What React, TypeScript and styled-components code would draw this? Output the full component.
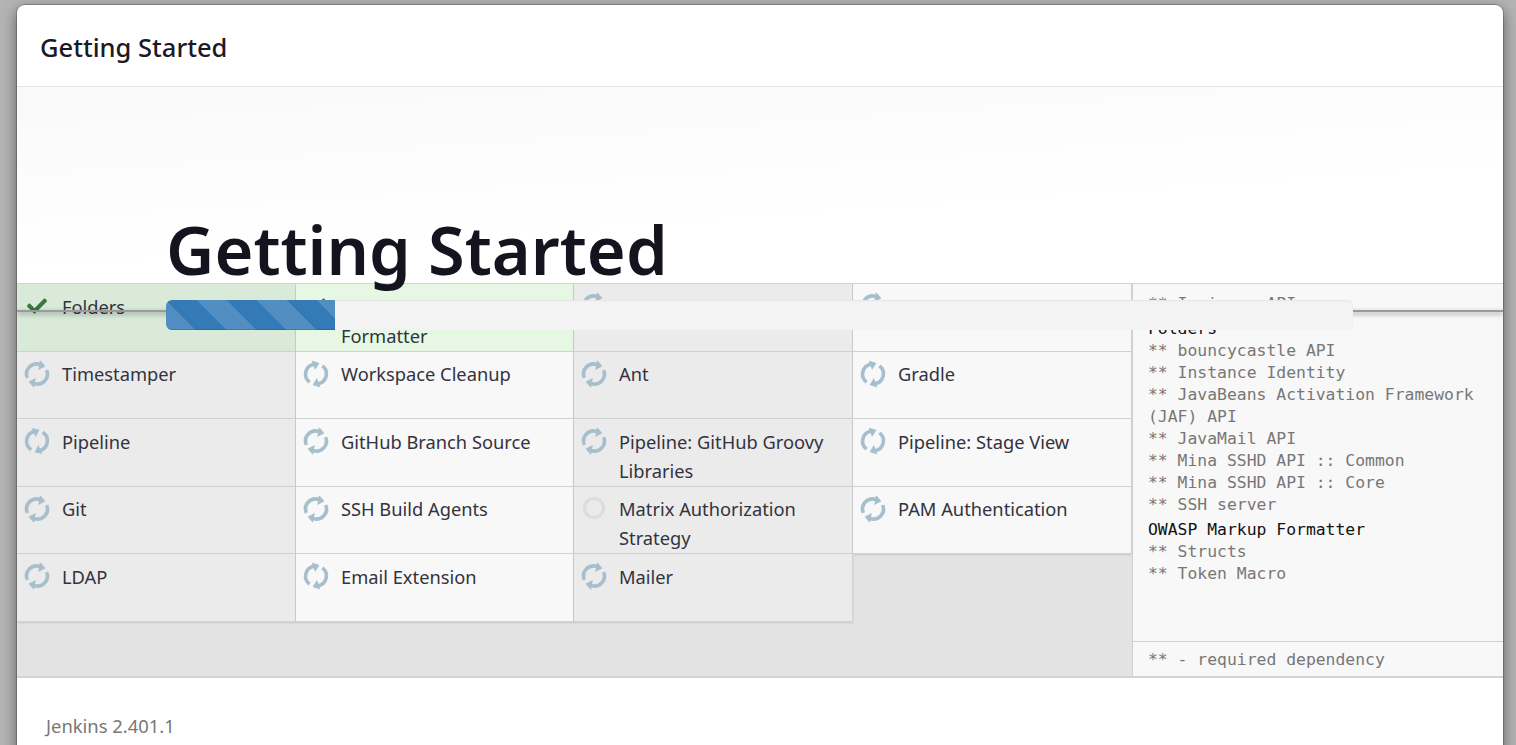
import React from "react";
import styled, { createGlobalStyle } from "styled-components";
import { FaCheck } from "react-icons/fa";

const Global = createGlobalStyle`
  html, body { margin: 0; height: 100%; overflow: hidden; background: #b4b4b4; }
  * { box-sizing: border-box; }
`;

const Backdrop = styled.div`
  height: 745px;
  padding: 5px 13px 0 17px;
  overflow: hidden;
  font-family: "Noto Sans", "Open Sans", sans-serif;
`;
const Dialog = styled.div`
  position: relative;
  background: #fff;
  border-radius: 8px 8px 0 0;
  box-shadow: 0 0 0 1px rgba(0, 0, 0, 0.2), 0 5px 15px rgba(0, 0, 0, 0.5);
  height: 800px;
  overflow: hidden;
`;
const Header = styled.header`
  height: 82px;
  padding: 2px 23px 0;
  display: flex;
  align-items: center;
  border-bottom: 1px solid #e5e5e5;
  font-size: 25.5px;
  font-weight: 500;
  color: #1a1a26;
`;
const Hero = styled.div`
  height: 196px;
  padding: 0 0 0 149px;
  display: flex;
  align-items: flex-end;
  background: linear-gradient(176deg, #f9f9f9 0%, #fff 62%);
`;
const Heading = styled.h1`
  position: relative;
  z-index: 2;
  margin: 0 0 -9px;
  font-size: 66.7px;
  line-height: 84px;
  font-weight: 600;
  color: #14141f;
`;
const Install = styled.div`
  display: grid;
  grid-template-columns: 1115px 371px;
  height: 395px;
  border-top: 1px solid #d4d4d4;
  border-bottom: 2px solid #d2d2d2;
  background: #e3e3e3;
`;
const Grid = styled.div`
  display: grid;
  grid-template-columns: 279px 278px 279px 279px;
  grid-auto-rows: 67.5px;
  align-content: start;
`;
const Cell = styled.div<{ $tone: "dark" | "light" | "okDark" | "okLight" }>`
  display: flex;
  align-items: flex-start;
  gap: 13px;
  padding: 7.5px 8px 0 8px;
  overflow: hidden;
  border-right: 1px solid #d2d2d2;
  border-bottom: 1px solid #d2d2d2;
  box-shadow: 0 1px 2px rgba(0, 0, 0, 0.12);
  background: ${(p) =>
    ({ dark: "#ebebeb", light: "#f8f8f8", okDark: "#d9ead9", okLight: "#e6f8e3" })[p.$tone]};
`;
const IconSlot = styled.span`
  flex: 0 0 24px;
  width: 24px;
  min-width: 0;
  height: 30px;
  display: flex;
  align-items: center;
  justify-content: center;
`;
const Spinner = styled.svg<{ $angle: number }>`
  width: 28px;
  height: 28px;
  margin: -1px -2px 0 -2px;
  flex: none;
  transform: rotate(${(p) => p.$angle}deg);
`;
const Check = styled(FaCheck)`
  width: 24px;
  height: 20px;
  margin-top: -1px;
  flex: none;
  color: #3c763d;
`;
const Pending = styled.span`
  width: 22px;
  height: 22px;
  margin-top: -3px;
  flex: none;
  border-radius: 50%;
  border: 3px solid #dcdcdc;
`;
const Name = styled.span`
  max-width: 212px;
  font-size: 18.3px;
  line-height: 29px;
  color: #333340;
`;
const Log = styled.aside`
  display: flex;
  flex-direction: column;
  border-left: 1px solid #cfcfcf;
  background: #f8f8f8;
  font-family: "DejaVu Sans Mono", monospace;
  font-size: 16.4px;
  line-height: 22px;
  color: #777;
`;
const LogBody = styled.div`
  flex: 1;
  padding: 9px 15px 0;
`;
const Plugin = styled.div`
  margin-top: 3px;
  color: #111;
`;
const Dep = styled.div`
  color: #777;
`;
const LogFooter = styled.div`
  height: 35px;
  padding: 7px 15px 0;
  border-top: 1px solid #d0d0d0;
`;
const Footer = styled.footer`
  padding: 34px 29px 0;
  font-size: 18.4px;
  line-height: 28px;
  color: #777;
`;
const Rule = styled.div`
  position: absolute;
  left: 0;
  right: 0;
  top: 305px;
  height: 2px;
  background: #9a9a9a;
  box-shadow: 0 2px 5px rgba(0, 0, 0, 0.45);
  z-index: 3;
`;
const Track = styled.div`
  position: absolute;
  left: 149px;
  top: 295px;
  width: 1187px;
  height: 30px;
  border-radius: 6px;
  background: #f3f3f3;
  overflow: hidden;
  box-shadow: inset 0 1px 2px rgba(0, 0, 0, 0.06);
  z-index: 4;
`;
const Fill = styled.div`
  height: 100%;
  background-color: #337ab7;
  background-image: repeating-linear-gradient(
    45deg,
    rgba(255, 255, 255, 0.15) 0,
    rgba(255, 255, 255, 0.15) 21.21px,
    transparent 21.21px,
    transparent 42.43px
  );
  box-shadow: inset 0 -1px 0 rgba(0, 0, 0, 0.15);
`;

function SyncIcon({ angle }: { angle: number }) {
  return (
    <Spinner $angle={angle} viewBox="0 0 28 28" fill="none">
      <path d="M5.2 19.5A10 10 0 0 1 15.5 4.2" stroke="#a7bfcd" strokeWidth="3.6" />
      <path d="M14.5 -0.2 L21 4.8 L14.5 9.8 Z" fill="#a7bfcd" />
      <path d="M22.8 8.5A10 10 0 0 1 12.5 23.8" stroke="#a7bfcd" strokeWidth="3.6" />
      <path d="M13.5 28.2 L7 23.2 L13.5 18.2 Z" fill="#a7bfcd" />
    </Spinner>
  );
}

type Status = "ok" | "spin" | "wait";
const plugins: { name: string; status: Status; angle?: number }[] = [
  { name: "Folders", status: "ok" },
  { name: "OWASP Markup Formatter", status: "ok" },
  { name: "Build Timeout", status: "spin", angle: 10 },
  { name: "Credentials Binding", status: "spin", angle: 10 },
  { name: "Timestamper", status: "spin", angle: 10 },
  { name: "Workspace Cleanup", status: "spin", angle: -20 },
  { name: "Ant", status: "spin", angle: 10 },
  { name: "Gradle", status: "spin", angle: -20 },
  { name: "Pipeline", status: "spin", angle: -25 },
  { name: "GitHub Branch Source", status: "spin", angle: 10 },
  { name: "Pipeline: GitHub Groovy Libraries", status: "spin", angle: 10 },
  { name: "Pipeline: Stage View", status: "spin", angle: -20 },
  { name: "Git", status: "spin", angle: 10 },
  { name: "SSH Build Agents", status: "spin", angle: 10 },
  { name: "Matrix Authorization Strategy", status: "wait" },
  { name: "PAM Authentication", status: "spin", angle: 10 },
  { name: "LDAP", status: "spin", angle: 10 },
  { name: "Email Extension", status: "spin", angle: -20 },
  { name: "Mailer", status: "spin", angle: 10 },
];

function tone(i: number, status: Status) {
  const dark = i % 4 === 0 || i % 4 === 2;
  if (status === "ok") return dark ? "okDark" : "okLight";
  return dark ? "dark" : "light";
}

export default function App() {
  return (
    <>
      <Global />
      <Backdrop>
        <Dialog>
          <Header>Getting Started</Header>
          <Hero>
            <Heading>Getting Started</Heading>
          </Hero>
          <Install>
            <Grid>
              {plugins.map((p, i) => (
                <Cell key={p.name} $tone={tone(i, p.status)}>
                  <IconSlot>
                    {p.status === "ok" && <Check />}
                    {p.status === "spin" && <SyncIcon angle={p.angle ?? 0} />}
                    {p.status === "wait" && <Pending />}
                  </IconSlot>
                  <Name>{p.name}</Name>
                </Cell>
              ))}
            </Grid>
            <Log>
              <LogBody>
                <Dep>** Ionicons API</Dep>
                <Plugin>Folders</Plugin>
                <Dep>** bouncycastle API</Dep>
                <Dep>** Instance Identity</Dep>
                <Dep>** JavaBeans Activation Framework (JAF) API</Dep>
                <Dep>** JavaMail API</Dep>
                <Dep>** Mina SSHD API :: Common</Dep>
                <Dep>** Mina SSHD API :: Core</Dep>
                <Dep>** SSH server</Dep>
                <Plugin>OWASP Markup Formatter</Plugin>
                <Dep>** Structs</Dep>
                <Dep>** Token Macro</Dep>
              </LogBody>
              <LogFooter>** - required dependency</LogFooter>
            </Log>
          </Install>
          <Footer>Jenkins 2.401.1</Footer>
          <Rule />
          <Track>
            <Fill style={{ width: `${(169 / 1187) * 100}%` }} />
          </Track>
        </Dialog>
      </Backdrop>
    </>
  );
}
